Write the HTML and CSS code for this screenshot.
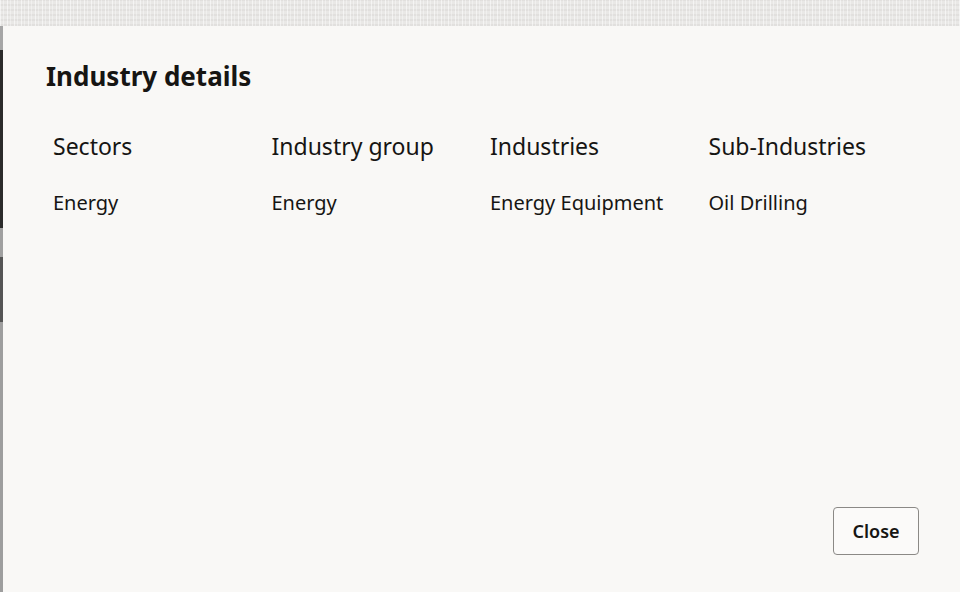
FILE: index.html
```html
<!DOCTYPE html>
<html lang="en">
<head>
<meta charset="utf-8">
<title>Industry details</title>
<link rel="stylesheet" href="styles.css">
</head>
<body>
<div class="page">
  <div class="topstrip"></div>
  <div class="main">
    <div class="sidestrip">
      <span class="seg seg-a"></span>
      <span class="seg seg-b"></span>
      <span class="seg seg-c"></span>
      <span class="seg seg-d"></span>
      <span class="seg seg-e"></span>
    </div>
    <div class="dialog" role="dialog" aria-labelledby="dlg-title">
      <h1 class="title" id="dlg-title">Industry details</h1>
      <div class="grid">
        <div class="head">Sectors</div>
        <div class="head">Industry group</div>
        <div class="head">Industries</div>
        <div class="head">Sub-Industries</div>
        <div class="cell">Energy</div>
        <div class="cell">Energy</div>
        <div class="cell">Energy Equipment</div>
        <div class="cell">Oil Drilling</div>
      </div>
      <div class="footer">
        <button class="btn" type="button">Close</button>
      </div>
    </div>
  </div>
</div>
</body>
</html>
```

FILE: styles.css
```css
* { box-sizing: border-box; }
html, body { margin: 0; padding: 0; }
body {
  width: 960px;
  height: 592px;
  overflow: hidden;
  font-family: "Noto Sans", "Open Sans", sans-serif;
  color: #161513;
  background: #f9f8f6;
}
.page {
  display: flex;
  flex-direction: column;
  height: 592px;
}
.topstrip {
  height: 26px;
  flex: none;
  background-color: #e9e8e6;
  background-image:
    repeating-linear-gradient(90deg, rgba(255,255,255,0.55) 0 1px, transparent 1px 3px, rgba(255,255,255,0.35) 3px 4px, transparent 4px 7px),
    repeating-linear-gradient(0deg, rgba(220,218,216,0.6) 0 2px, transparent 2px 5px);
}
.main {
  flex: 1;
  display: flex;
  min-height: 0;
}
.sidestrip {
  width: 3px;
  flex: none;
  display: flex;
  flex-direction: column;
}
.seg { display: block; }
.seg-a { height: 24px; background: #a6a6a6; }
.seg-b { height: 178px; background: #2b2b2b; }
.seg-c { height: 29px; background: #a0a0a0; }
.seg-d { height: 65px; background: #555555; }
.seg-e { flex: 1; background: #9e9e9e; }
.dialog {
  flex: 1;
  min-width: 0;
  background: #f9f8f6;
  display: flex;
  flex-direction: column;
  padding: 33px 41px 37px 43px;
}
.title {
  margin: 0;
  font-size: 26px;
  font-weight: 700;
  line-height: 34px;
  color: #161513;
}
.grid {
  margin-top: 37px;
  display: grid;
  grid-template-columns: 218.5px 218.5px 218.5px 1fr;
  padding-left: 7px;
  row-gap: 28px;
}
.head {
  font-size: 23px;
  line-height: 32px;
  font-weight: 400;
  color: #161513;
  white-space: nowrap;
}
.cell {
  font-size: 20px;
  line-height: 26px;
  color: #161513;
  white-space: nowrap;
}
.footer {
  margin-top: auto;
  display: flex;
  justify-content: flex-end;
}
.btn {
  width: 86px;
  height: 48px;
  border: 1px solid #8b8986;
  border-radius: 4px;
  background: #fbfaf9;
  font-family: inherit;
  font-size: 18px;
  font-weight: 600;
  color: #161513;
  padding: 0;
}
```
